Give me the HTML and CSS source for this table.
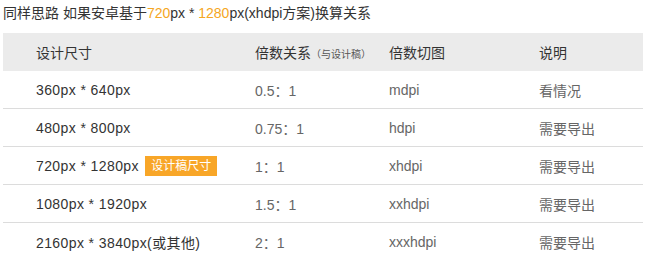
FILE: index.html
```html
<!DOCTYPE html>
<html lang="zh">
<head>
<meta charset="utf-8">
<link rel="stylesheet" href="styles.css">
</head>
<body>
<div class="page">
  <p class="title">同样思路 如果安卓基于<span class="hl">720</span>px * <span class="hl">1280</span>px(xhdpi方案)换算关系</p>
  <table class="grid">
    <colgroup>
      <col class="c1"><col class="c2"><col class="c3"><col class="c4">
    </colgroup>
    <thead>
      <tr><th>设计尺寸</th><th>倍数关系<span class="sub">（与设计稿）</span></th><th>倍数切图</th><th>说明</th></tr>
    </thead>
    <tbody>
      <tr><td>360px * 640px</td><td>0.5：1</td><td>mdpi</td><td>看情况</td></tr>
      <tr><td>480px * 800px</td><td>0.75：1</td><td>hdpi</td><td>需要导出</td></tr>
      <tr><td>720px * 1280px <span class="badge">设计稿尺寸</span></td><td>1：1</td><td>xhdpi</td><td>需要导出</td></tr>
      <tr><td>1080px * 1920px</td><td>1.5：1</td><td>xxhdpi</td><td>需要导出</td></tr>
      <tr><td>2160px * 3840px(或其他)</td><td>2：1</td><td>xxxhdpi</td><td>需要导出</td></tr>
    </tbody>
  </table>
</div>
</body>
</html>
```
FILE: styles.css
```css
html, body { margin: 0; padding: 0; background: #fff; }
body { font-family: "Liberation Sans", "Noto Sans CJK SC", sans-serif; color: #333; }
.page { padding: 0 2px 0 3px; }
.title { margin: 0; padding-top: 4px; height: 29px; font-size: 14px; line-height: 18px; color: #333; }
.hl { color: #f5a623; }
.grid { width: 640px; border-collapse: collapse; table-layout: fixed; font-size: 14px; }
.c1 { width: 252px; }
.c2 { width: 134px; }
.c3 { width: 150px; }
.c4 { width: 104px; }
th { background: #ebebeb; font-weight: normal; text-align: left; height: 38px; padding: 0; color: #333; }
td { height: 37px; padding: 0; border-bottom: 1px solid #dcdcdc; color: #666; }
th:first-child, td:first-child { padding-left: 33px; color: #333; }
td:first-child { letter-spacing: 0.4px; }
.sub { font-size: 10px; color: #555; }
.badge { display: inline-block; background: #f8a628; color: #fff; font-size: 12px; letter-spacing: 0; line-height: 20px; height: 20px; padding: 0 6px; margin-left: 2px; vertical-align: 1px; }
```
